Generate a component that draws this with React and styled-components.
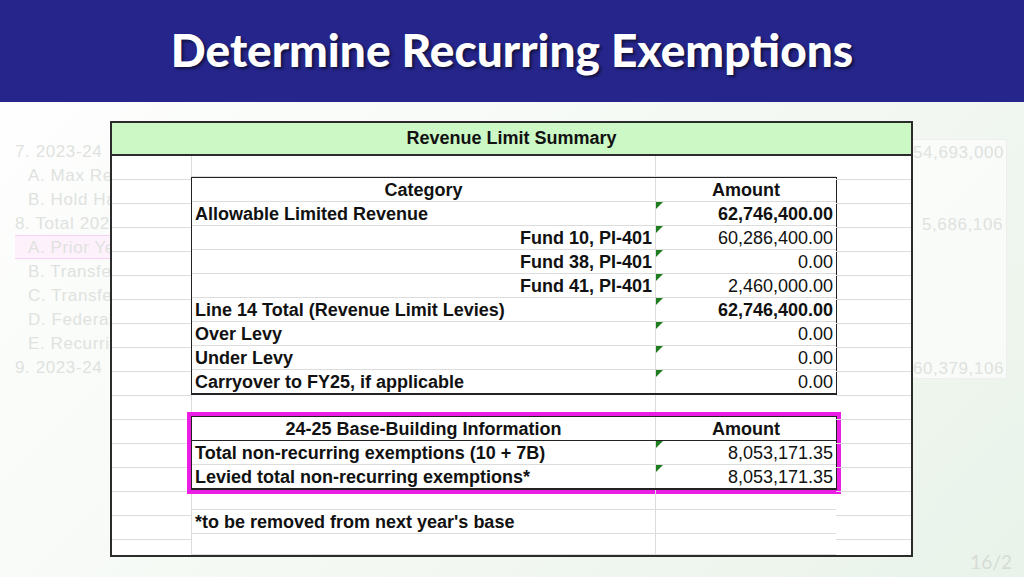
import React from "react";
import styled, { createGlobalStyle, css } from "styled-components";

const Global = createGlobalStyle`
  body {
    margin: 0;
    font-family: "Liberation Sans", Arial, sans-serif;
    background: linear-gradient(135deg, #ffffff 0%, #f3f8f2 60%, #e9f3ea 100%);
  }
`;

const Page = styled.div`
  width: 1024px;
  height: 577px;
  position: relative;
  overflow: hidden;
`;

const Banner = styled.header`
  height: 102px;
  background: #25258b;
  display: flex;
  align-items: center;
  justify-content: center;
`;

const Title = styled.h1`
  margin: 0 0 4px;
  font-family: Lato, "Open Sans", sans-serif;
  font-weight: 900;
  font-size: 46px;
  color: #fff;
  text-shadow: 2px 2px 3px rgba(0, 0, 0, 0.55);
`;

const Stage = styled.div`
  display: flex;
  padding-top: 19px;
`;

const GhostLeft = styled.div`
  width: 110px;
  padding-left: 15px;
  box-sizing: border-box;
  margin-top: 18px;
  overflow: hidden;
  white-space: nowrap;
`;

const GhostRight = styled.div`
  width: 94px;
  margin-top: 18px;
  border: 1px solid #eee;
  border-left: none;
  height: 240px;
  box-sizing: border-box;
  background: rgba(255, 255, 255, 0.6);
`;

const GhostRow = styled.div`
  height: 24px;
  line-height: 24px;
  font-size: 17px;
  letter-spacing: 0.6px;
  color: #dfe2df;
  padding-left: ${(p) => (p.$indent ? "13px" : "0")};
  border-top: 1px solid ${(p) => (p.$pink ? "#f8cff4" : "transparent")};
  border-bottom: 1px solid ${(p) => (p.$pink ? "#f8cff4" : "transparent")};
  box-sizing: border-box;
  text-align: ${(p) => (p.$right ? "right" : "left")};
  padding-right: ${(p) => (p.$right ? "3px" : "0")};
  background: ${(p) => (p.$pink ? "rgba(255,230,252,0.5)" : "transparent")};
`;

const Panel = styled.div`
  width: 803px;
  height: 436px;
  flex: none;
  box-sizing: border-box;
  border: 2px solid #2b2b2b;
  background: #fff;
  display: flex;
  flex-direction: column;
`;

const PanelHead = styled.div`
  height: 31px;
  flex: none;
  background: #ccf8c6;
  border-bottom: 2px solid #2b2b2b;
  display: flex;
  align-items: center;
  justify-content: center;
  font-weight: bold;
  font-size: 18px;
  color: #111;
`;

const Sheet = styled.div`
  display: flex;
  flex: 1;
  overflow: hidden;
`;

const SideCol = styled.div`
  width: ${(p) => p.$w}px;
  flex: none;
  border-right: ${(p) => (p.$line ? "1px solid #dcdcdc" : "none")};
`;

const Blank = styled.div`
  height: 24px;
  border-bottom: 1px solid #dcdcdc;
  box-sizing: border-box;
`;

const Center = styled.div`
  width: 644px;
  flex: none;
  display: flex;
  flex-direction: column;
`;

const Box = styled.div`
  border: 1px solid #222;
  margin: 0 -1px 0 -1px;
  ${(p) =>
    p.$magenta &&
    css`
      outline: 4px solid #ea1fe3;
      outline-offset: 0;
    `}
`;

const Row = styled.div`
  display: flex;
  height: 24px;
  box-sizing: border-box;
  border-bottom: 1px solid ${(p) => (p.$dark ? "#222" : "#dcdcdc")};
`;

const Label = styled.div`
  width: 464px;
  flex: none;
  box-sizing: border-box;
  padding: 0 3px;
  border-right: 1px solid #dcdcdc;
  font-size: 18px;
  line-height: 24px;
  font-weight: bold;
  color: #111;
  white-space: nowrap;
  text-align: ${(p) => p.$align || "left"};
`;

const Amt = styled.div`
  flex: 1;
  position: relative;
  padding: 0 3px;
  font-size: 18px;
  line-height: 24px;
  color: #111;
  font-weight: ${(p) => (p.$bold ? "bold" : "normal")};
  text-align: ${(p) => (p.$center ? "center" : "right")};
  ${(p) =>
    p.$flag &&
    css`
      &::before {
        content: "";
        position: absolute;
        left: 0;
        top: 0;
        border-top: 7px solid #1e7d1e;
        border-right: 7px solid transparent;
      }
    `}
`;

const SlideNo = styled.div`
  position: absolute;
  right: 12px;
  bottom: 4px;
  font-size: 19px;
  color: #d6dbd6;
  font-family: Lato, sans-serif;
`;

const summary = [
  ["Allowable Limited Revenue", "left", "62,746,400.00", true],
  ["Fund 10, PI-401", "right", "60,286,400.00", false],
  ["Fund 38, PI-401", "right", "0.00", false],
  ["Fund 41, PI-401", "right", "2,460,000.00", false],
  ["Line 14 Total (Revenue Limit Levies)", "left", "62,746,400.00", true],
  ["Over Levy", "left", "0.00", false],
  ["Under Levy", "left", "0.00", false],
  ["Carryover to FY25, if applicable", "left", "0.00", false],
];

const ghostLeft = [
  ["7.   2023-24", false],
  ["A. Max Revenue", true],
  ["B. Hold Harmless", true],
  ["8.   Total 2023", false],
  ["A. Prior Year", true, true],
  ["B. Transfer", true],
  ["C. Transfer", true],
  ["D. Federal", true],
  ["E. Recurring", true],
  ["9.   2023-24", false],
];

const ghostRight = ["54,693,000", "", "", "5,686,106", "", "", "", "", "", "60,379,106"];

const blanks = (n) => Array.from({ length: n }, (_, i) => <Blank key={i} />);

export default function App() {
  return (
    <Page>
      <Global />
      <Banner>
        <Title>Determine Recurring Exemptions</Title>
      </Banner>
      <Stage>
        <GhostLeft>
          {ghostLeft.map(([t, indent, pink]) => (
            <GhostRow key={t} $indent={indent} $pink={pink}>
              {t}
            </GhostRow>
          ))}
        </GhostLeft>
        <Panel>
          <PanelHead>Revenue Limit Summary</PanelHead>
          <Sheet>
            <SideCol $w={79} $line>{blanks(17)}</SideCol>
            <Center>
              <Row>
                <Label />
                <Amt />
              </Row>
              <Box>
                <Row>
                  <Label $align="center">Category</Label>
                  <Amt $bold $center>Amount</Amt>
                </Row>
                {summary.map(([t, align, v, bold], i) => (
                  <Row key={t} $dark={i === summary.length - 1}>
                    <Label $align={align}>{t}</Label>
                    <Amt $bold={bold} $flag>{v}</Amt>
                  </Row>
                ))}
              </Box>
              <Row>
                <Label />
                <Amt />
              </Row>
              <Box $magenta>
                <Row $dark>
                  <Label $align="center">24-25 Base-Building Information</Label>
                  <Amt $bold $center>Amount</Amt>
                </Row>
                <Row>
                  <Label>Total non-recurring exemptions (10 + 7B)</Label>
                  <Amt $flag>8,053,171.35</Amt>
                </Row>
                <Row $dark>
                  <Label>Levied total non-recurring exemptions*</Label>
                  <Amt $flag>8,053,171.35</Amt>
                </Row>
              </Box>
              <Row>
                <Label />
                <Amt />
              </Row>
              <Row>
                <Label>*to be removed from next year's base</Label>
                <Amt />
              </Row>
              <Row>
                <Label />
                <Amt />
              </Row>
            </Center>
            <SideCol $w={78}>{blanks(17)}</SideCol>
          </Sheet>
        </Panel>
        <GhostRight>
          {ghostRight.map((v, i) => (
            <GhostRow key={i} $right>
              {v}
            </GhostRow>
          ))}
        </GhostRight>
      </Stage>
      <SlideNo>16/2</SlideNo>
    </Page>
  );
}
